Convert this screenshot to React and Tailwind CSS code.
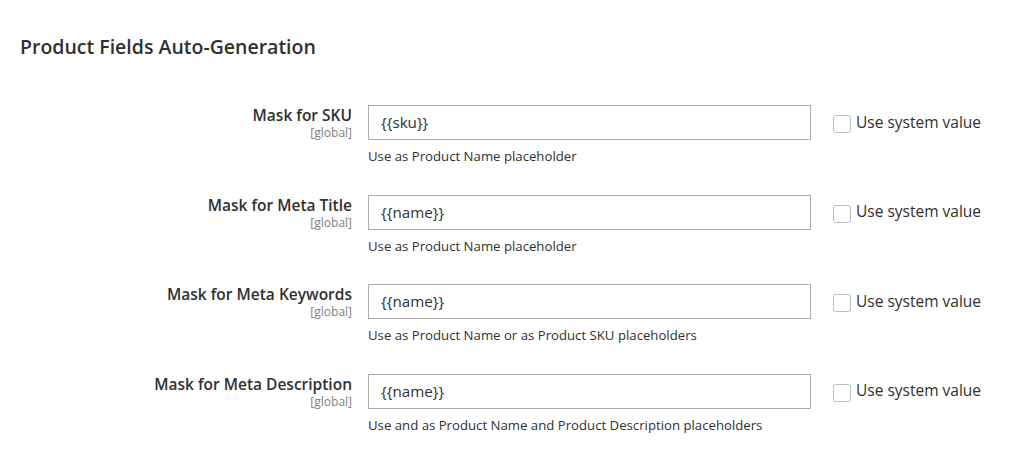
import React from "react";

const rows = [
    { label: "Mask for SKU", value: "{{sku}}", hint: "Use as Product Name placeholder" },
    { label: "Mask for Meta Title", value: "{{name}}", hint: "Use as Product Name placeholder" },
    { label: "Mask for Meta Keywords", value: "{{name}}", hint: "Use as Product Name or as Product SKU placeholders" },
    { label: "Mask for Meta Description", value: "{{name}}", hint: "Use and as Product Name and Product Description placeholders" },
];

export default function App() {
    return (
        <div className="h-[465px] w-[1024px] bg-white text-[#303030]" style={{ fontFamily: "'Open Sans', 'Liberation Sans', sans-serif" }}>
            <h2 className="pl-5 pt-[34px] text-[19.5px] font-semibold leading-[26px] text-[#303030]">
                Product Fields Auto-Generation
            </h2>
            <div className="mt-[45px]">
                {rows.map((r) => (
                    <FieldRow key={r.label} {...r} />
                ))}
            </div>
        </div>
    );
}

function FieldRow({ label, value, hint }) {
    return (
        <div className="flex h-[89.5px] items-start">
            <div className="w-[352px] text-right">
                <div className="text-[15.5px] font-semibold leading-[21px] text-[#303030]">{label}</div>
                <div className="text-[12px] leading-[14px] text-[#808080]">[global]</div>
            </div>
            <div className="ml-4 w-[443px]">
                <div className="flex h-[35px] items-center border border-[#adadad] bg-white px-3 text-[15.2px] text-[#303030]">
                    {value}
                </div>
                <div className="mt-[7px] text-[13.2px] leading-[18px] text-[#303030]">{hint}</div>
            </div>
            <label className="ml-[22px] flex h-[35px] items-center gap-[5px] text-[15.5px] text-[#303030]">
                <span className="mt-[3px] block h-[18px] w-[18px] rounded-[3px] border border-[#bdbdbd] bg-white" />
                Use system value
            </label>
        </div>
    );
}
